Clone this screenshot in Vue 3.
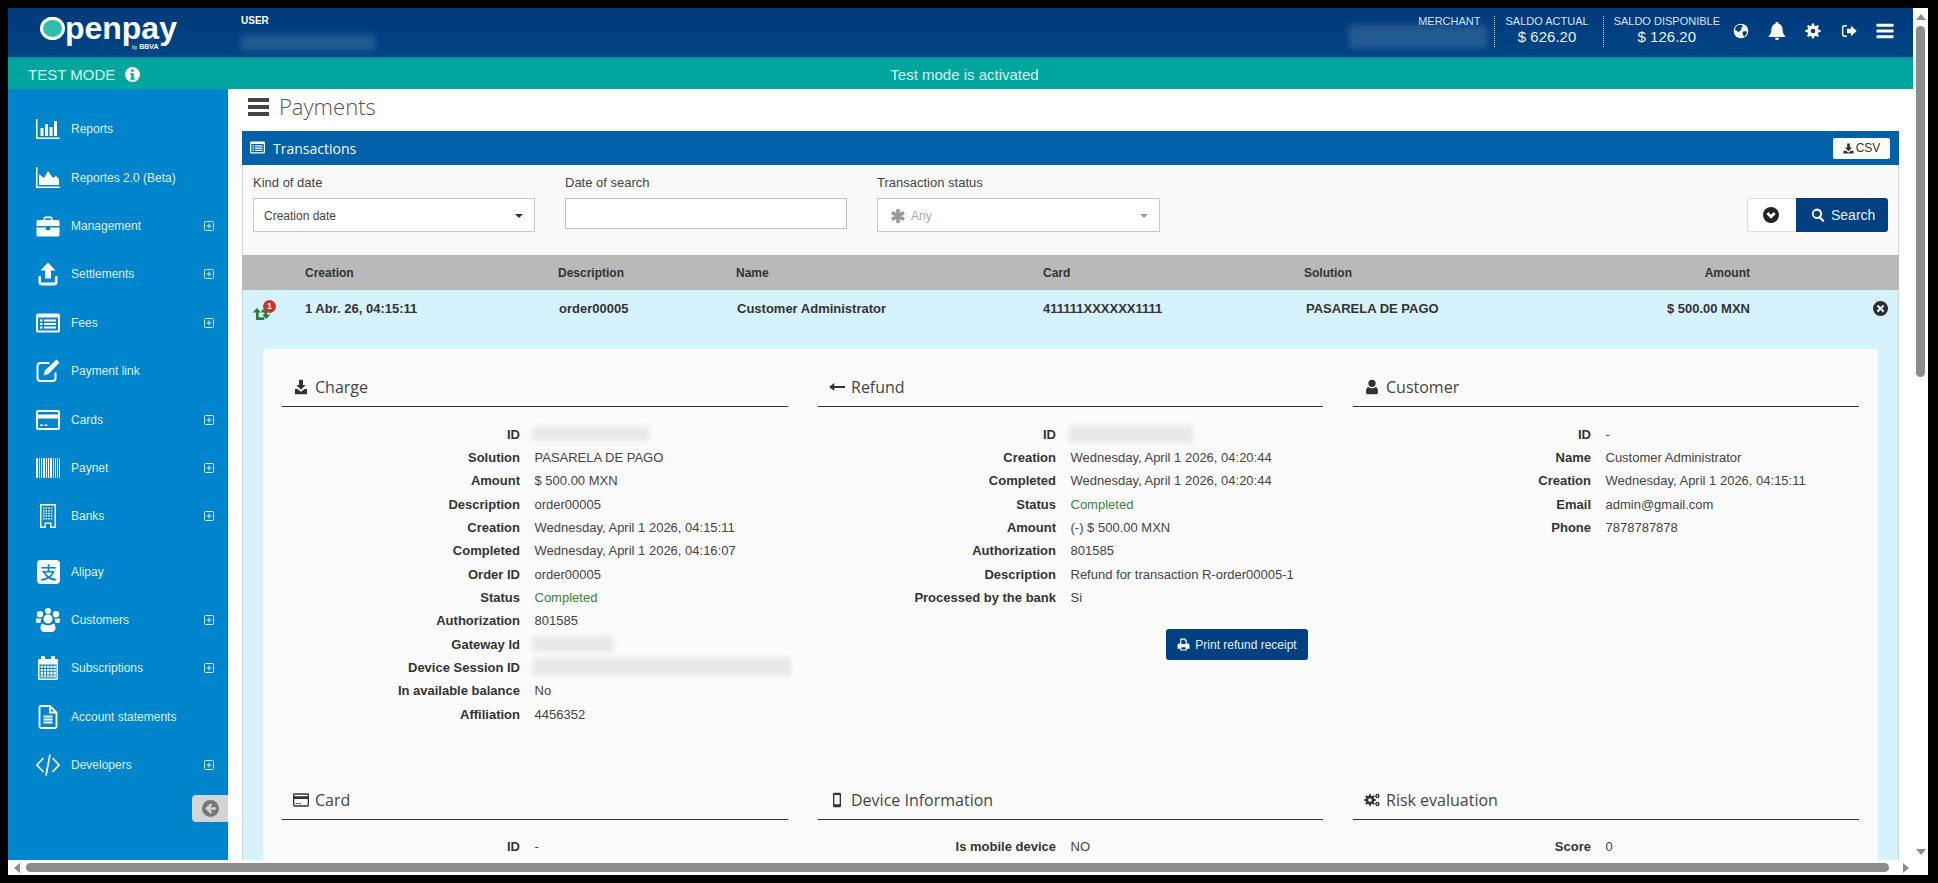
<template>
  <div class="frame">
    <div class="window">
      <div class="top">
        <div class="viewport">
          <!-- barra superior -->
          <header class="header">
            <div class="logo-box">
              <div class="logo">
                <span class="logo-o">O</span>penpay
                <span class="logo-by"><small>by</small> BBVA</span>
              </div>
            </div>
            <div class="user">
              <div class="user-label">USER</div>
              <div class="blur-head user-blur"></div>
            </div>
            <div class="head-right">
              <div class="merchant">
                <div class="head-label">MERCHANT</div>
                <div class="blur-head merchant-blur"></div>
              </div>
              <div class="balance first">
                <div class="head-label">SALDO ACTUAL</div>
                <div class="head-value">$ 626.20</div>
              </div>
              <div class="balance">
                <div class="head-label">SALDO DISPONIBLE</div>
                <div class="head-value">$ 126.20</div>
              </div>
              <div class="head-icons">
                <svg class="head-icon" viewBox="0 0 24 24">
                  <circle cx="12" cy="12" r="11" fill="#fff" />
                  <path d="M7 3.500l6-1 2 3-3 2 1 3-3 1-1 3-3-3-3-1 1-4zM14 13l6-1 1 3-4 6-2-3z" fill="#003f7f" />
                </svg>
                <svg class="head-icon bell" viewBox="0 0 24 24">
                  <path d="M12 0a2 2 0 0 1 2 2.200c4 .9 5.500 4.300 5.500 8 0 4.500 1.500 6.500 3.500 8.300v1.500H1v-1.500c2-1.800 3.500-3.800 3.500-8.300 0-3.700 1.500-7.100 5.500-8A2 2 0 0 1 12 0zM9 21h6a3 3 0 0 1-6 0z" fill="#fff" />
                </svg>
                <svg class="head-icon" viewBox="0 0 24 24">
                  <path :d="gear(12, 12, 11.500, 8.500, 8, 3.500)" fill="#fff" fill-rule="evenodd" />
                </svg>
                <svg class="head-icon" viewBox="0 0 24 24">
                  <path d="M9 4H5.500A3 3 0 0 0 2.500 7v10a3 3 0 0 0 3 3H9" fill="none" stroke="#fff" stroke-width="2.200" />
                  <path d="M9 8.500h6V4l8.500 8-8.500 8v-4.500H9z" fill="#fff" />
                </svg>
                <svg class="head-icon" viewBox="0 0 1792 1792">
                  <path d="M1664 1344v128q0 26-19 45t-45 19h-1408q-26 0-45-19t-19-45v-128q0-26 19-45t45-19h1408q26 0 45 19t19 45zm0-512v128q0 26-19 45t-45 19h-1408q-26 0-45-19t-19-45v-128q0-26 19-45t45-19h1408q26 0 45 19t19 45zm0-512v128q0 26-19 45t-45 19h-1408q-26 0-45-19t-19-45v-128q0-26 19-45t45-19h1408q26 0 45 19t19 45z" fill="#fff" />
                </svg>
              </div>
            </div>
          </header>

          <div class="testbar">
            <div class="test-left">
              TEST MODE
              <svg class="info" viewBox="0 0 24 24">
                <circle cx="12" cy="12" r="12" fill="#fff" />
                <path d="M10 4h4v3.500h-4zM8.500 10h5.500v8h1.500v2.500h-7V18H10v-5.500H8.500z" fill="#00a69d" />
              </svg>
            </div>
            <div class="test-msg">Test mode is activated</div>
          </div>

          <div class="body">
            <!-- menu lateral -->
            <aside class="sidebar">
              <nav class="menu">
                <a v-for="item in menu" :key="item.label" class="menu-item" :class="{ gap: item.gap }">
                  <span v-if="item.icon === 'alipay'" class="alipay">支</span>
                  <svg v-else class="menu-icon" viewBox="0 0 24 24">
                    <path v-if="icons[item.icon].d" :d="icons[item.icon].d" fill="#fff" fill-rule="evenodd" />
                    <path v-if="icons[item.icon].s" :d="icons[item.icon].s" fill="none" stroke="#fff" :stroke-width="icons[item.icon].w || 2" />
                  </svg>
                  <span class="menu-text">{{ item.label }}</span>
                  <svg v-if="item.more" class="menu-more" viewBox="0 0 10 10">
                    <path d="M1.500.5h7a1 1 0 0 1 1 1v7a1 1 0 0 1-1 1h-7a1 1 0 0 1-1-1v-7a1 1 0 0 1 1-1zM5 2.500v5M2.500 5h5" fill="none" stroke="#d3ecfa" stroke-width="1" />
                  </svg>
                </a>
              </nav>
              <button class="collapse">
                <svg viewBox="0 0 24 24">
                  <circle cx="12" cy="12" r="12" fill="#777" />
                  <path d="M4.500 12L12 4.500 14.500 7l-3 3.200H19.500v3.600H11.500l3 3.200L12 19.500z" fill="#d2d5d8" />
                </svg>
              </button>
            </aside>

            <main class="main">
              <div class="page-title">
                <svg class="title-bars" viewBox="0 0 21 18">
                  <path d="M0 0h21v4H0zM0 7h21v4H0zM0 14h21v4H0z" fill="#444" />
                </svg>
                <h1>Payments</h1>
              </div>

              <section class="panel">
                <div class="panel-head">
                  <svg class="panel-icon" viewBox="0 0 24 24">
                    <path :d="icons.fees.d" fill="#fff" fill-rule="evenodd" />
                  </svg>
                  <span>Transactions</span>
                  <button class="csv">
                    <svg viewBox="0 0 24 24"><path d="M9 1h6v9h5l-8 8-8-8h5zM1 17h6l5 4 5-4h6v6H1z" fill="#333" /></svg>
                    CSV
                  </button>
                </div>

                <div class="filters">
                  <div class="field">
                    <label>Kind of date</label>
                    <div class="select">Creation date<i class="caret"></i></div>
                  </div>
                  <div class="field">
                    <label>Date of search</label>
                    <input class="date-input" type="text" />
                  </div>
                  <div class="field wide">
                    <label>Transaction status</label>
                    <div class="select muted">
                      <svg class="asterisk" viewBox="0 0 24 24">
                        <path d="M10 1h4v7.500l6.500-3.700 2 3.400L16 12l6.500 3.800-2 3.400L14 15.500V23h-4v-7.500l-6.500 3.700-2-3.400L8 12 1.500 8.200l2-3.400L10 8.500z" fill="#999" stroke="#999" stroke-width="2" />
                      </svg>
                      Any<i class="caret"></i>
                    </div>
                  </div>
                  <div class="filter-btns">
                    <button class="btn-toggle">
                      <svg viewBox="0 0 24 24">
                        <circle cx="12" cy="12" r="12" fill="#222" />
                        <path d="M5 10.500l3-3 4 4 4-4 3 3-7 7z" fill="#fff" />
                      </svg>
                    </button>
                    <button class="btn-search">
                      <svg viewBox="0 0 24 24">
                        <path d="M10 1a9 9 0 0 1 7.100 14.500l6 6-2.600 2.600-6-6A9 9 0 1 1 10 1zm0 3.500a5.500 5.500 0 1 0 0 11 5.500 5.500 0 0 0 0-11z" fill="#fff" fill-rule="evenodd" />
                      </svg>
                      Search
                    </button>
                  </div>
                </div>

                <div class="tr thead">
                  <span></span>
                  <span>Creation</span>
                  <span class="nudge">Description</span>
                  <span class="nudge">Name</span>
                  <span>Card</span>
                  <span>Solution</span>
                  <span class="amount">Amount</span>
                </div>

                <div class="tr row">
                  <span class="row-icon">
                    <svg class="swap" viewBox="0 0 20 14">
                      <path d="M5 1l4.500 5H7v5h6v3H4V6H.5z" fill="#2f7a3c" />
                      <path d="M10 3h6v5h3.500L15 13l-4.500-5H13V6h-3z" fill="#2f7a3c" />
                    </svg>
                    <b class="badge">1</b>
                  </span>
                  <span>1 Abr. 26, 04:15:11</span>
                  <span class="nudge">order00005</span>
                  <span class="nudge">Customer Administrator</span>
                  <span>411111XXXXXX1111</span>
                  <span class="nudge">PASARELA DE PAGO</span>
                  <span class="amount">$ 500.00 MXN</span>
                  <svg class="close" viewBox="0 0 24 24">
                    <path d="M12 0a12 12 0 1 1 0 24 12 12 0 0 1 0-24zM8.300 5.800L5.800 8.300 9.500 12l-3.700 3.700 2.500 2.500 3.700-3.700 3.700 3.700 2.500-2.500-3.700-3.700 3.700-3.700-2.500-2.500L12 9.500z" fill="#2b2b2b" fill-rule="evenodd" />
                  </svg>
                </div>

                <div class="detail-wrap">
                  <div class="detail">
                    <div v-for="sec in sections" :key="sec.title" class="sec">
                      <h3 class="sec-title">
                        <svg class="sec-icon" viewBox="0 0 24 24">
                          <path :d="sec.d" fill="#333" fill-rule="evenodd" />
                        </svg>
                        {{ sec.title }}
                      </h3>
                      <div class="kv-list">
                        <div v-for="r in sec.rows" :key="r.k" class="kv">
                          <span class="k">{{ r.k }}</span>
                          <span v-if="r.blur" class="blur-val" :style="{ width: r.blur + 'px', height: (r.bh || 14) + 'px' }"></span>
                          <span v-else class="v" :class="{ ok: r.ok }">{{ r.v }}</span>
                        </div>
                      </div>
                      <button v-if="sec.print" class="print">
                        <svg viewBox="0 0 24 24">
                          <path d="M6 1h9l3 3v6h2a3 3 0 0 1 3 3v7h-5v3H6v-3H1v-7a3 3 0 0 1 3-3h2zm2 2v8h8V5h-2V3zm0 14v4h8v-4z" fill="#fff" fill-rule="evenodd" />
                        </svg>
                        Print refund receipt
                      </button>
                    </div>
                  </div>
                </div>
              </section>
            </main>
          </div>
        </div>

        <!-- scroll vertical -->
        <div class="vscroll">
          <i class="arrow up"></i>
          <div class="vthumb"></div>
          <i class="arrow down"></i>
        </div>
      </div>

      <!-- scroll horizontal -->
      <div class="hscroll">
        <i class="arrow left"></i>
        <div class="hthumb"></div>
        <i class="arrow right"></i>
      </div>
    </div>
  </div>
</template>

<script setup>
// rueda dentada como path, con hueco central
const gear = (cx, cy, R, r, teeth, hole) => {
  const step = (Math.PI * 2) / teeth
  const pt = (rad, a) => `${(cx + rad * Math.cos(a)).toFixed(2)} ${(cy + rad * Math.sin(a)).toFixed(2)}`
  let d = ''
  for (let i = 0; i < teeth; i++) {
    const a = i * step
    d += `${i === 0 ? 'M' : 'L'}${pt(r, a - step * 0.3)}L${pt(R, a - step * 0.17)}L${pt(R, a + step * 0.17)}L${pt(r, a + step * 0.3)}`
  }
  d += `zM${cx - hole} ${cy}a${hole} ${hole} 0 1 0 ${hole * 2} 0a${hole} ${hole} 0 1 0 ${-hole * 2} 0z`
  return d
}

// cuadritos para edificio y calendario
const cells = (x0, y0, cols, rows, size, step) => {
  let d = ''
  for (let r = 0; r < rows; r++) {
    for (let c = 0; c < cols; c++) {
      d += `M${x0 + c * step} ${y0 + r * step}h${size}v${size}h${-size}z`
    }
  }
  return d
}

const barcode = () => {
  const bars = [[0, 2], [3, 1], [5, 1], [7, 2], [10, 1], [12, 1], [14, 2], [17, 1], [19, 1], [21, 1], [23, 1]]
  return bars.map(([x, w]) => `M${x} 2h${w}v20h${-w}z`).join('')
}

const icons = {
  reports: { d: 'M0 2h1.500v18.500H24V22H0zM4.500 11h3v8h-3zM9 7h3v12H9zM13.500 10h3v9h-3zM18 4h3v15h-3z' },
  area: { d: 'M0 1h1.500v19.500H24V22H0zM3 19V8l5 4 4-7 5 7 3-2 3 3v6z' },
  briefcase: { d: 'M9 2.500h6a1.500 1.500 0 0 1 1.500 1.500v2H22a1.500 1.500 0 0 1 1.500 1.500V12H.5V7.500A1.500 1.500 0 0 1 2 6h5.500V4A1.500 1.500 0 0 1 9 2.500zM9.200 4.200V6h5.600V4.200zM.5 13.500H10V16h4v-2.500h9.500V21a1.500 1.500 0 0 1-1.500 1.500H2A1.500 1.500 0 0 1 .5 21z' },
  upload: { d: 'M12 .5l7.500 8H15v8H9v-8H4.500zM2.500 14H5v5.500a1 1 0 0 0 1 1h12a1 1 0 0 0 1-1V14h2.500v6a3.500 3.500 0 0 1-3.500 3.500H6A3.500 3.500 0 0 1 2.500 20z' },
  fees: { d: 'M2 2.500h20a2 2 0 0 1 2 2v15a2 2 0 0 1-2 2H2a2 2 0 0 1-2-2v-15a2 2 0 0 1 2-2zM2 6.500V19.500h20V6.500zM4 8.500h2.500V10.500H4zM8 8.500h12V10.500H8zM4 12h2.500V14H4zM8 12h12V14H8zM4 15.500h2.500V17.500H4zM8 15.500h12V17.500H8z' },
  link: { s: 'M19.500 13.500V19a3 3 0 0 1-3 3h-12a3 3 0 0 1-3-3V7a3 3 0 0 1 3-3h9', w: 2, d: 'M20.500.5l3 3L12.500 15l-5 1.500 1.500-5z' },
  card: { d: 'M2 2h20a2 2 0 0 1 2 2v16a2 2 0 0 1-2 2H2a2 2 0 0 1-2-2V4a2 2 0 0 1 2-2zM2 4v2.500h20V4zM2 10.500V20h20v-9.500zM4 16.500h3V18H4zM8.500 16.500h3V18h-3z' },
  paynet: { d: barcode() },
  banks: { d: 'M4 0h16v24h-6v-4h-4v4H4zM5.500 1.500V22.500H8.500v-4h7v4H18.500V1.500z' + cells(7, 3.500, 4, 5, 1.500, 2.600) },
  users: { d: 'M12 6.500a4.500 4.500 0 1 1 0 9 4.500 4.500 0 0 1 0-9zM4 3a3.200 3.200 0 1 1 0 6.400A3.200 3.200 0 0 1 4 3zM20 3a3.200 3.200 0 1 1 0 6.400A3.200 3.200 0 0 1 20 3zM12 0a3 3 0 1 1 0 6 3 3 0 0 1 0-6zM6.500 15.500c1.300 1.200 3.500 1.800 5.500 1.800s4.200-.6 5.500-1.800c1.500.5 2 2.500 2 4.500 0 2-1.500 4-4 4h-7c-2.500 0-4-2-4-4 0-2 .5-4 2-4.500zM1 10c1 .9 3 1.100 4.800.6-.9 1.400-1.300 2.800-1.300 4.400h-3C.2 15 0 14 0 12.500 0 11 .3 10.500 1 10zM23 10c.7.5 1 1 1 2.500 0 1.500-.2 2.500-1.500 2.500h-3c0-1.600-.4-3-1.300-4.400 1.800.5 3.800.3 4.800-.6z' },
  calendar: { d: 'M6 0h2a1 1 0 0 1 1 1v2h6V1a1 1 0 0 1 1-1h2a1 1 0 0 1 1 1v2h1.500A1.500 1.500 0 0 1 22 4.500v18a1.500 1.500 0 0 1-1.500 1.500h-17A1.500 1.500 0 0 1 2 22.500v-18A1.500 1.500 0 0 1 3.500 3H5V1a1 1 0 0 1 1-1zM3.500 8.500v14h17v-14z' + cells(4.700, 9.700, 5, 4, 2.300, 3.200) },
  statements: { s: 'M14 1H5a1.500 1.500 0 0 0-1.500 1.500v19A1.500 1.500 0 0 0 5 23h14a1.500 1.500 0 0 0 1.500-1.500V7.500zM14 1v6.500h6.500M7.500 11.500h9M7.500 14.500h9M7.500 17.500h9', w: 1.800 },
  code: { s: 'M7.500 5L1 12l6.500 7M16.500 5L23 12l-6.500 7M14 1.500L10 22.500', w: 1.700 }
}

const menu = [
  { label: 'Reports', icon: 'reports' },
  { label: 'Reportes 2.0 (Beta)', icon: 'area' },
  { label: 'Management', icon: 'briefcase', more: true },
  { label: 'Settlements', icon: 'upload', more: true },
  { label: 'Fees', icon: 'fees', more: true },
  { label: 'Payment link', icon: 'link' },
  { label: 'Cards', icon: 'card', more: true },
  { label: 'Paynet', icon: 'paynet', more: true },
  { label: 'Banks', icon: 'banks', more: true },
  { label: 'Alipay', icon: 'alipay', gap: true },
  { label: 'Customers', icon: 'users', more: true },
  { label: 'Subscriptions', icon: 'calendar', more: true },
  { label: 'Account statements', icon: 'statements' },
  { label: 'Developers', icon: 'code', more: true }
]

const cogs = gear(9, 12, 9, 6.500, 8, 2.800) + gear(20, 6, 4, 2.800, 6, 1.200) + gear(20, 18, 4, 2.800, 6, 1.200)

const sections = [
  {
    title: 'Charge',
    d: 'M9 1h6v8h4l-7 7-7-7h4zM3 15h3.500l5.500 4 5.500-4H21v8H3z',
    rows: [
      { k: 'ID', blur: 116 },
      { k: 'Solution', v: 'PASARELA DE PAGO' },
      { k: 'Amount', v: '$ 500.00 MXN' },
      { k: 'Description', v: 'order00005' },
      { k: 'Creation', v: 'Wednesday, April 1 2026, 04:15:11' },
      { k: 'Completed', v: 'Wednesday, April 1 2026, 04:16:07' },
      { k: 'Order ID', v: 'order00005' },
      { k: 'Status', v: 'Completed', ok: true },
      { k: 'Authorization', v: '801585' },
      { k: 'Gateway Id', blur: 80, bh: 16 },
      { k: 'Device Session ID', blur: 258, bh: 18 },
      { k: 'In available balance', v: 'No' },
      { k: 'Affiliation', v: '4456352' }
    ]
  },
  {
    title: 'Refund',
    d: 'M8 6v4.500h16v3H8V18l-8-6z',
    print: true,
    rows: [
      { k: 'ID', blur: 124, bh: 17 },
      { k: 'Creation', v: 'Wednesday, April 1 2026, 04:20:44' },
      { k: 'Completed', v: 'Wednesday, April 1 2026, 04:20:44' },
      { k: 'Status', v: 'Completed', ok: true },
      { k: 'Amount', v: '(-) $ 500.00 MXN' },
      { k: 'Authorization', v: '801585' },
      { k: 'Description', v: 'Refund for transaction R-order00005-1' },
      { k: 'Processed by the bank', v: 'Si' }
    ]
  },
  {
    title: 'Customer',
    d: 'M12 1a5.500 5.500 0 1 1 0 11 5.500 5.500 0 0 1 0-11zM6.500 12c1.400 1.300 3.300 2 5.500 2s4.100-.7 5.500-2c2.500.3 3.500 3.500 3.500 7.500 0 2.500-1.500 3.500-3.500 3.500h-11C4.500 23 3 22 3 19.500 3 15.500 4 12.300 6.500 12z',
    rows: [
      { k: 'ID', v: '-' },
      { k: 'Name', v: 'Customer Administrator' },
      { k: 'Creation', v: 'Wednesday, April 1 2026, 04:15:11' },
      { k: 'Email', v: 'admin@gmail.com' },
      { k: 'Phone', v: '7878787878' }
    ]
  },
  {
    title: 'Card',
    d: icons.card.d,
    rows: [{ k: 'ID', v: '-' }]
  },
  {
    title: 'Device Information',
    d: 'M8 1h8a2 2 0 0 1 2 2v18a2 2 0 0 1-2 2H8a2 2 0 0 1-2-2V3a2 2 0 0 1 2-2zM8 4.500V18.500h8V4.500z',
    rows: [{ k: 'Is mobile device', v: 'NO' }]
  },
  {
    title: 'Risk evaluation',
    d: cogs,
    rows: [{ k: 'Score', v: '0' }]
  }
]
</script>

<style scoped>
.frame {
  width: 1938px;
  height: 883px;
  box-sizing: border-box;
  padding: 8px 10px 8px 8px;
  background: #000;
  font-family: "Liberation Sans", Arial, sans-serif;
  overflow: hidden;
}

.window {
  width: 1920px;
  height: 867px;
  display: flex;
  flex-direction: column;
  background: #fff;
}

.top {
  flex: 1;
  display: flex;
  min-height: 0;
}

.viewport {
  width: 1905px;
  height: 852px;
  display: flex;
  flex-direction: column;
  overflow: hidden;
}

/* header */
.header {
  height: 49px;
  flex: none;
  display: flex;
  background: linear-gradient(#00397a, #004585);
  color: #fff;
}

.logo-box {
  width: 233px;
  box-sizing: border-box;
  padding-left: 32px;
  flex: none;
}

.logo {
  position: relative;
  font-size: 32px;
  font-weight: 700;
  line-height: 34px;
  padding-top: 3px;
  white-space: nowrap;
}

.logo-o {
  position: relative;
}

/* hoja turquesa con aro blanco encima de la O */
.logo-o::after {
  content: '';
  position: absolute;
  left: 0;
  top: 7px;
  width: 25px;
  height: 23px;
  box-sizing: border-box;
  border: 3px solid #fff;
  background: #2cc0ac;
  border-radius: 50%;
}

.logo-by {
  position: absolute;
  left: 92px;
  top: 34px;
  font-size: 7px;
  line-height: 9px;
}

.logo-by small {
  font-size: 5px;
  font-weight: 400;
}

.user {
  padding-top: 6px;
}

.user-label {
  font-size: 10px;
  font-weight: 700;
  line-height: 14px;
}

.blur-head {
  background: rgba(255, 255, 255, 0.14);
  filter: blur(3px);
}

.user-blur {
  width: 134px;
  height: 15px;
  margin-top: 7px;
}

.head-right {
  margin-left: auto;
  display: flex;
  padding-right: 10px;
}

.merchant {
  padding-top: 6px;
  width: 145px;
  position: relative;
}

.head-label {
  font-size: 11px;
  line-height: 14px;
  color: #cfe6fa;
  white-space: nowrap;
}

.merchant .head-label {
  text-align: right;
  padding-right: 14px;
}

.merchant-blur {
  width: 138px;
  height: 23px;
  position: absolute;
  left: 0;
  top: 17px;
}

.balance {
  margin-top: 8px;
  height: 31px;
  border-left: 1px dotted #cfe6fa;
  padding: 0 3px 0 10px;
  text-align: center;
}

.balance.first {
  padding-right: 14px;
}

.balance .head-label {
  margin-top: -2px;
}

.head-value {
  font-size: 15px;
  line-height: 18px;
  color: #e8f3fd;
}

.head-icons {
  display: flex;
}

.head-icon {
  width: 16px;
  height: 16px;
  padding: 0 10px;
  margin-top: 15px;
  box-sizing: content-box;
}

.head-icon:last-child {
  width: 20px;
  height: 20px;
  margin-top: 13px;
  padding: 0 8px;
}

.bell {
  height: 18px;
  width: 18px;
  padding: 0 9px;
  margin-top: 14px;
}

/* test mode */
.testbar {
  height: 32px;
  flex: none;
  display: grid;
  grid-template-columns: 1fr auto 1fr;
  align-items: center;
  background: #00a69d;
  border-top: 2px solid #0491a0;
  box-sizing: border-box;
  color: #d6f5f1;
}

.test-left {
  display: flex;
  align-items: center;
  padding-left: 20px;
  font-size: 15px;
  gap: 10px;
}

.info {
  width: 15px;
  height: 15px;
}

.test-msg {
  font-size: 15px;
  margin-left: 8px;
}

.body {
  flex: 1;
  display: flex;
  min-height: 0;
}

/* sidebar */
.sidebar {
  width: 220px;
  flex: none;
  background: #0085cc;
  display: flex;
  flex-direction: column;
  padding-top: 16px;
  box-sizing: border-box;
}

.menu-item {
  height: 48.4px;
  display: flex;
  align-items: center;
  padding: 0 14px 0 28px;
  color: #dff2fd;
  font-size: 12px;
}

.menu-item.gap {
  margin-top: 7px;
}

.menu-icon {
  width: 24px;
  height: 24px;
  flex: none;
}

.alipay {
  width: 23px;
  height: 24px;
  margin-left: 1px;
  flex: none;
  background: #fff;
  border-radius: 4px;
  color: #0085cc;
  font: 500 17px/23px "Noto Sans CJK SC", sans-serif;
  text-align: center;
}

.menu-text {
  margin-left: 11px;
  white-space: nowrap;
}

.menu-more {
  width: 10px;
  height: 10px;
  margin-left: auto;
}

.collapse {
  align-self: flex-end;
  width: 36px;
  height: 27px;
  margin-top: 6px;
  padding: 0;
  border: none;
  border-radius: 4px 0 0 4px;
  background: #d2d5d8;
  display: flex;
  align-items: center;
  justify-content: center;
}

.collapse svg {
  width: 17px;
  height: 17px;
  margin-left: 1px;
}

/* main */
.main {
  flex: 1;
  min-width: 0;
  padding: 0 14px;
  background: #fff;
}

.page-title {
  height: 42px;
  display: flex;
  align-items: center;
  padding-left: 6px;
  padding-bottom: 8px;
  box-sizing: border-box;
}

.title-bars {
  width: 21px;
  height: 18px;
  margin-top: 2px;
}

h1 {
  margin: 0 0 0 10px;
  font: 300 22px "Open Sans", sans-serif;
  color: #555;
}

.panel-head {
  height: 34px;
  display: flex;
  align-items: center;
  background: #0061a8;
  color: #fff;
  padding: 0 9px 0 8px;
  font: 14px "Open Sans", sans-serif;
}

.panel-icon {
  width: 15px;
  height: 15px;
  margin: -2px 8px 0 0;
}

.csv {
  margin-left: auto;
  width: 57px;
  height: 21px;
  border: none;
  border-radius: 2px;
  background: #fff;
  color: #333;
  font: 12px "Liberation Sans", sans-serif;
  display: flex;
  align-items: center;
  justify-content: center;
  gap: 2px;
  padding: 0;
}

.csv svg {
  width: 11px;
  height: 11px;
}

.filters {
  height: 90px;
  box-sizing: border-box;
  border-left: 1px solid #d4d4d4;
  border-right: 1px solid #d4d4d4;
  background: #fafafa;
  padding: 10px 10px 0 10px;
  display: flex;
  gap: 30px;
}

.field {
  width: 282px;
}

.field.wide {
  width: 283px;
}

.field label {
  display: block;
  font-size: 13px;
  line-height: 16px;
  color: #444;
  margin-bottom: 7px;
}

.select {
  position: relative;
  height: 34px;
  box-sizing: border-box;
  border: 1px solid #c9c9c9;
  background: #fff;
  padding: 2px 0 0 10px;
  font-size: 12px;
  color: #444;
  display: flex;
  align-items: center;
}

.select.muted {
  color: #aaa;
  padding: 1px 0 0 13px;
}

.asterisk {
  width: 14px;
  height: 14px;
  margin-right: 6px;
}

.caret {
  position: absolute;
  right: 11px;
  top: 15px;
  border-left: 4px solid transparent;
  border-right: 4px solid transparent;
  border-top: 4px solid #333;
}

.muted .caret {
  border-top-color: #999;
}

.date-input {
  display: block;
  width: 282px;
  height: 31px;
  box-sizing: border-box;
  border: 1px solid #c0c0c0;
  background: #fff;
  padding: 0 8px;
  outline: none;
}

.filter-btns {
  margin-left: auto;
  margin-top: 23px;
  display: flex;
  height: 34px;
}

.btn-toggle {
  width: 49px;
  box-sizing: border-box;
  border: 1px solid #ddd;
  border-right: none;
  border-radius: 3px 0 0 3px;
  background: #fff;
  padding: 0 2px 0 0;
  display: flex;
  align-items: center;
  justify-content: center;
}

.btn-toggle svg {
  width: 16px;
  height: 16px;
}

.btn-search {
  width: 92px;
  border: none;
  border-radius: 0 3px 3px 0;
  background: #004080;
  color: #e6f1fb;
  font: 14px "Liberation Sans", sans-serif;
  display: flex;
  align-items: center;
  padding: 0 0 0 15px;
  gap: 6px;
}

.btn-search svg {
  width: 14px;
  height: 14px;
}

/* tabla */
.tr {
  display: grid;
  grid-template-columns: 62px 252px 178px 308px 261px 300px 146px 1fr;
  position: relative;
}

.thead {
  height: 35px;
  padding: 0 1px;
  align-items: center;
  background: #b9b9b9;
  font-size: 12px;
  font-weight: 700;
  color: #333;
}

.thead .nudge {
  margin-left: 1px;
}

.amount {
  text-align: right;
  white-space: nowrap;
}

.row {
  height: 59px;
  padding: 10px 1px 0 0;
  box-sizing: border-box;
  background: #d7f2ff;
  border-left: 1px solid #c8d4da;
  border-right: 1px solid #c8d4da;
  font-size: 13px;
  font-weight: 700;
  line-height: 18px;
  color: #333;
}

.row > span {
  white-space: nowrap;
}

.row .nudge {
  margin-left: 2px;
}

.row-icon {
  position: relative;
}

.swap {
  position: absolute;
  left: 9px;
  top: 7px;
  width: 19px;
  height: 13px;
}

.badge {
  position: absolute;
  left: 20px;
  top: 0;
  width: 13px;
  height: 13px;
  border-radius: 50%;
  background: #c0392b;
  color: #fff;
  font-size: 9px;
  line-height: 13px;
  text-align: center;
}

.close {
  position: absolute;
  right: 10px;
  top: 11px;
  width: 15px;
  height: 15px;
}

.detail-wrap {
  background: #d7f2ff;
  border-left: 1px solid #c8d4da;
  border-right: 1px solid #c8d4da;
  padding: 0 20px;
}

.detail {
  background: #fbfbfb;
  border-radius: 4px 4px 0 0;
  padding: 0 19px;
  display: grid;
  grid-template-columns: 506px 505px 506px;
  column-gap: 30px;
  grid-auto-rows: 413px;
}

.sec-title {
  margin: 0;
  padding: 21px 0 2px 11px;
  height: 58px;
  box-sizing: border-box;
  border-bottom: 1px solid #333;
  display: flex;
  align-items: center;
  gap: 6px;
  font: 400 16px/35px "Open Sans", sans-serif;
  color: #444;
}

.sec-icon {
  width: 16px;
  height: 16px;
}

.kv-list {
  padding-top: 15.5px;
}

.sec:nth-child(n + 4) .kv-list {
  padding-top: 14.5px;
}

.kv {
  height: 23.33px;
  display: flex;
  align-items: center;
  font-size: 13px;
  white-space: nowrap;
}

.k {
  width: 238px;
  flex: none;
  text-align: right;
  font-weight: 700;
  color: #333;
}

.v {
  margin-left: 14.5px;
  color: #444;
}

.v.ok {
  color: #3e803e;
}

.blur-val {
  margin-left: 13px;
  background: #e8e8e8;
  filter: blur(2.500px);
  flex: none;
}

.print {
  display: flex;
  align-items: center;
  justify-content: center;
  gap: 5px;
  width: 142px;
  height: 31px;
  margin: 20px 15px 0 auto;
  padding: 0;
  border: none;
  border-radius: 3px;
  background: #004080;
  color: #e6f1fb;
  font: 12px "Liberation Sans", sans-serif;
}

.print svg {
  width: 13px;
  height: 13px;
}

/* scrollbars */
.vscroll {
  width: 15px;
  display: flex;
  flex-direction: column;
  align-items: center;
  justify-content: space-between;
  padding-top: 6px;
  box-sizing: border-box;
  position: relative;
}

.vthumb {
  position: absolute;
  left: 3px;
  top: 18px;
  width: 9px;
  height: 351px;
  border-radius: 5px;
  background: #8c8c8c;
}

.hscroll {
  height: 15px;
  flex: none;
  display: flex;
  align-items: center;
  position: relative;
}

.hthumb {
  position: absolute;
  left: 18px;
  top: 3px;
  width: 1863px;
  height: 9px;
  border-radius: 5px;
  background: #8c8c8c;
}

.arrow {
  width: 0;
  height: 0;
  display: block;
}

.arrow.up {
  border-left: 5px solid transparent;
  border-right: 5px solid transparent;
  border-bottom: 6px solid #8c8c8c;
}

.arrow.down {
  margin-bottom: 5px;
  border-left: 5px solid transparent;
  border-right: 5px solid transparent;
  border-top: 6px solid #8c8c8c;
}

.arrow.left {
  margin-left: 6px;
  border-top: 5px solid transparent;
  border-bottom: 5px solid transparent;
  border-right: 6px solid #8c8c8c;
}

.arrow.right {
  position: absolute;
  left: 1895px;
  border-top: 5px solid transparent;
  border-bottom: 5px solid transparent;
  border-left: 6px solid #8c8c8c;
}
</style>

<style>
html,
body {
  margin: 0;
  overflow: hidden;
}
</style>
